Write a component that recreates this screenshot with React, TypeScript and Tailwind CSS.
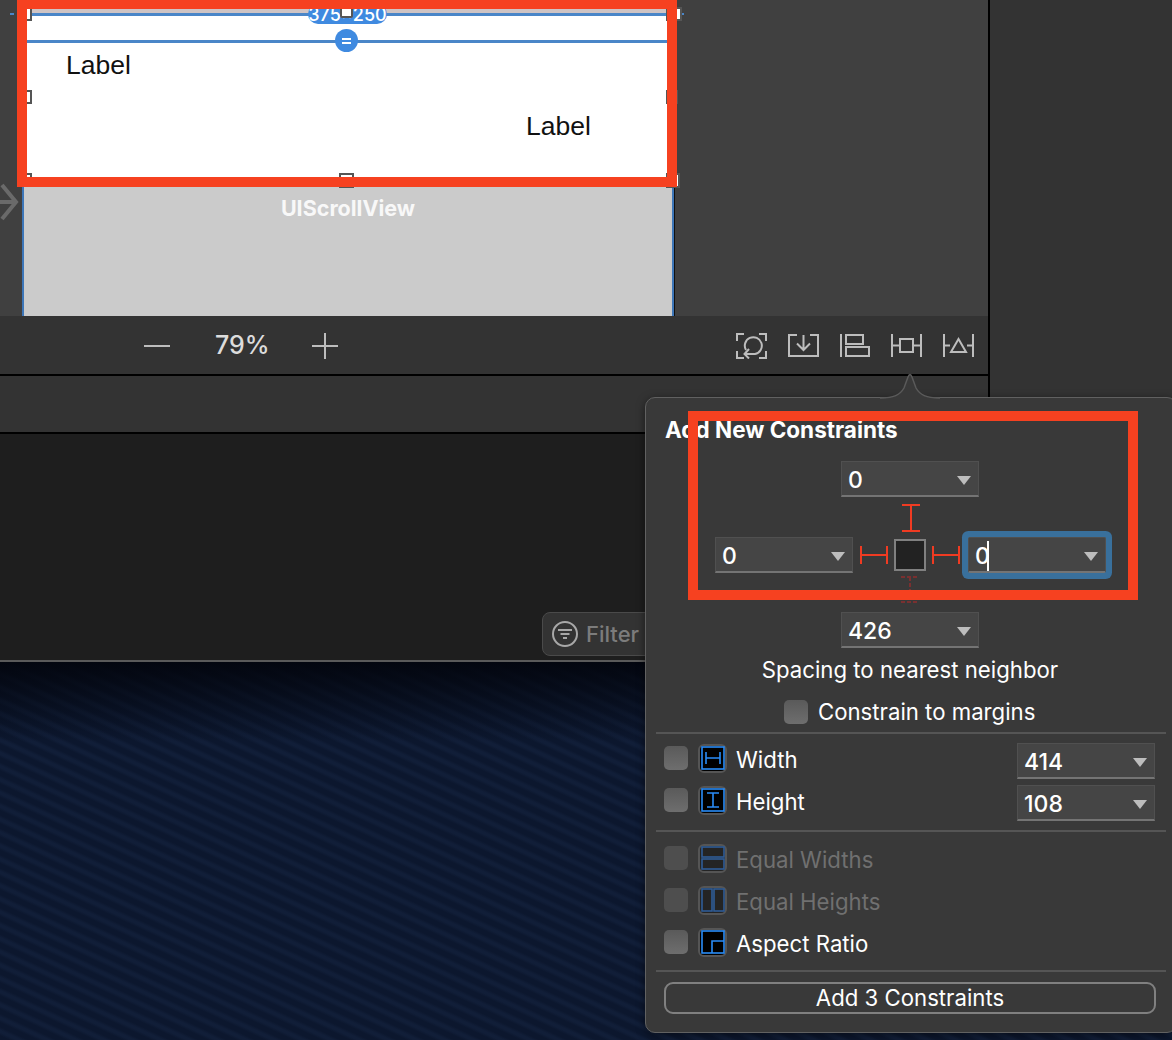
import React from "react";

const Caret = () => (
  <svg width="14" height="9" viewBox="0 0 14 9" className="absolute right-[7px] top-[14px]">
    <path d="M0 0H14L7 9Z" fill="#bdbdbd" />
  </svg>
);

function Field({ value, cursor, className = "" }: { value: string; cursor?: boolean; className?: string }) {
  return (
    <div className={`relative h-[36px] w-[138px] shrink-0 border border-[#505050] border-b-2 border-b-[#747474] bg-[#454545] pl-[6px] text-[23px] font-medium leading-[36px] text-white ${className}`}>
      <span>{value}</span>
      {cursor && <span className="absolute left-[18px] top-[3px] h-[30px] w-[2px] bg-white" />}
      <Caret />
    </div>
  );
}

const Check = ({ dim, className = "" }: { dim?: boolean; className?: string }) => (
  <div className={`h-[24px] w-[24px] shrink-0 rounded-[5px] ${dim ? "bg-[#4e4e4e]" : "bg-gradient-to-b from-[#5a5a5a] to-[#6e6e6e]"} ${className}`} />
);

function ToolIcon({ children, dim }: { children: React.ReactNode; dim?: boolean }) {
  return (
    <div className={`flex h-[29px] w-[29px] shrink-0 items-center justify-center rounded-[6px] border-2 border-[#555] ${dim ? "bg-[#242424]" : "bg-black"}`}>
      <svg width="24" height="24" viewBox="0 0 24 24" fill="none" stroke={dim ? "#2f5c96" : "#2a8cf7"} strokeWidth="1.600">
        {children}
      </svg>
    </div>
  );
}

function Row({ icon, label, dim, value }: { icon: React.ReactNode; label: string; dim?: boolean; value?: string }) {
  return (
    <div className="flex h-[42px] items-center pl-[18px] pr-[21px]">
      <Check dim={dim} className="-translate-y-[2px]" />
      <div className="ml-[10px] -translate-y-[2px]">
        <ToolIcon dim={dim}>{icon}</ToolIcon>
      </div>
      <span className={`ml-[9px] text-[22.2px] ${dim ? "text-[#707070]" : "text-white"}`}>{label}</span>
      {value && <Field value={value} className="ml-auto translate-y-[1px]" />}
    </div>
  );
}

const Divider = ({ className = "" }: { className?: string }) => (
  <div className={`mx-[10px] h-[2px] bg-[#555] ${className}`} />
);

const Handle = ({ className }: { className: string }) => (
  <div className={`absolute border-2 border-[#555] bg-white ${className}`} />
);

const Glyph = ({ w, h, children }: { w: number; h: number; children: React.ReactNode }) => (
  <svg width={w} height={h} viewBox={`0 0 ${w} ${h}`} fill="none" stroke="#bdbdbd" strokeWidth="2">
    {children}
  </svg>
);

export default function App() {
  return (
    <div className="relative h-[1040px] w-[1172px] overflow-hidden bg-[#0c1830] font-['Inter','Liberation_Sans',sans-serif]">
      <div className="flex h-[662px]">
        <div className="flex w-[988px] shrink-0 flex-col">
          {/* Canvas */}
          <div className="relative h-[316px] shrink-0 overflow-hidden bg-[#404040] pl-[22px]">
            <div className="w-[652px] border-x-2 border-[#3d76b8] bg-[#cbcbcb] shadow-[1px_0_0_#111]">
              <div className="relative h-[178px] bg-white">
                <div className="h-[13px] bg-[#cfc4c4]" />
                <div className="h-[3px] bg-[#4a86c8]" />
                <div className="mt-[24px] h-[3px] bg-[#4a86c8]" />
                <div className="absolute left-[42px] top-[48px] text-[26.500px] leading-[34px] text-[#111] [font-family:'Liberation_Sans']">Label</div>
                <div className="absolute left-[502px] top-[109px] text-[26.500px] leading-[34px] text-[#111] [font-family:'Liberation_Sans']">Label</div>
                <div className="absolute left-[284px] top-[4px] h-[20px] w-[79px] rounded-full bg-[#3f8ae0] text-center text-[18px] font-medium leading-[22px] text-white">375×250</div>
                <Handle className="left-[316px] top-[4px] h-[14px] w-[13px] rounded-[2px]" />
                <div className="absolute left-[311px] top-[29px] flex h-[23px] w-[23px] flex-col items-center justify-center gap-[2px] rounded-full bg-[#3f8ae0]">
                  <span className="h-[2px] w-[9px] bg-white" />
                  <span className="h-[2px] w-[9px] bg-white" />
                </div>
              </div>
              <div className="h-[138px] pt-[18px] text-center text-[21.500px] font-bold leading-[25px] text-[#f8f8f8]">UIScrollView</div>
            </div>
            <svg width="20" height="38" viewBox="0 0 20 38" fill="none" stroke="#6a6a6a" strokeWidth="4" className="absolute left-0 top-[183px]">
              <path d="M2 2L16 19L2 36M-4 19H16" />
            </svg>
            <div className="absolute left-[10px] top-[13px] h-[2px] w-[4px] bg-[#4a86c8]" />
            <div className="absolute left-[680px] top-[13px] h-[2px] w-[4px] bg-[#4a86c8]" />
            <Handle className="left-[339px] top-[173px] h-[15px] w-[15px]" />
            <Handle className="left-[24px] top-[90px] h-[14px] w-[8px]" />
            <Handle className="left-[666px] top-[90px] h-[14px] w-[12px]" />
            <Handle className="left-[24px] top-[7px] h-[14px] w-[8px]" />
            <Handle className="left-[666px] top-[7px] h-[14px] w-[16px]" />
            <Handle className="left-[24px] top-[173px] h-[14px] w-[8px]" />
            <Handle className="left-[666px] top-[173px] h-[15px] w-[14px]" />
          </div>

          {/* Toolbar */}
          <div className="flex h-[60px] shrink-0 items-center border-b-2 border-black bg-[#333] pl-[144px] pr-[14px] pt-[1px]">
            <Glyph w={26} h={2}><path d="M0 1H26" /></Glyph>
            <span className="ml-[45px] w-[52px] text-[25px] font-medium text-[#dcdcdc]">79%</span>
            <span className="ml-[45px]">
              <Glyph w={26} h={26}><path d="M0 13H26M13 0V26" /></Glyph>
            </span>
            <div className="ml-auto flex items-center gap-[21px]">
              <Glyph w={31} h={26}>
                <path d="M8 1H1V8M23 1H30V8M1 18V25H8M30 18V25H23" />
                <path d="M10 17A8.500 8.500 0 1 1 19 21H9M13 16L8.500 21L13 25.500" />
              </Glyph>
              <Glyph w={31} h={23}>
                <path d="M9 1H1V22H30V1H22" />
                <path d="M15.500 1V15M9 9.500L15.500 16L22 9.500" />
              </Glyph>
              <Glyph w={30} h={23}>
                <path d="M1 0V23" />
                <rect x="6" y="1" width="17" height="9" />
                <rect x="6" y="13" width="23" height="9" />
              </Glyph>
              <Glyph w={31} h={23}>
                <path d="M1 0V23M30 0V23M1 11.500H8M22 11.500H30" />
                <rect x="9" y="5" width="13" height="13" />
              </Glyph>
              <Glyph w={31} h={23}>
                <path d="M1 0V23M30 0V23M1 11.500H7M24 11.500H30" />
                <path d="M15.500 5L23 18H8Z" />
              </Glyph>
            </div>
          </div>

          <div className="h-[58px] shrink-0 border-b-2 border-black bg-[#333]" />

          {/* Dark panel */}
          <div className="flex flex-1 justify-end border-b-2 border-[#5a5a5a] bg-[#1e1e1e] pr-[246px] pt-[178px]">
            <div className="flex h-[44px] w-[200px] items-center rounded-[8px] border border-[#4a4a4a] bg-[#333] pl-[9px]">
              <svg width="26" height="26" viewBox="0 0 26 26" fill="none" stroke="#a8a8a8" strokeWidth="2">
                <circle cx="13" cy="13" r="12" />
                <path d="M6 9H20M8.500 13H17.500M11 17H15" />
              </svg>
              <span className="ml-[8px] text-[22px] font-medium text-[#7c7c7c]">Filter</span>
            </div>
          </div>
        </div>
        <div className="w-[2px] shrink-0 bg-black" />
        <div className="flex-1 bg-[#333]" />
      </div>

      {/* Denim */}
      <div className="h-[378px] bg-[linear-gradient(180deg,#03060f_0px,rgba(3,6,15,0)_80px),repeating-linear-gradient(25deg,#0c172e_0px,#0c172e_4px,#111e38_7px,#111e38_9px,#0c172e_12px)]" />

      {/* Popover */}
      <div className="absolute left-[645px] top-[397px] z-10 w-[532px] rounded-[10px] border border-[#616161] bg-[#393939] pb-[18px] shadow-[0_2px_8px_rgba(0,0,0,0.5)]">
        <div className="ml-[19px] mt-[18px] h-[28px] text-[22.500px] font-bold leading-[28px] text-white">Add New Constraints</div>
        <Field value="0" className="ml-[195px] mt-[17px]" />
        <svg width="18" height="28" viewBox="0 0 18 28" fill="none" stroke="#f03b22" strokeWidth="2" className="ml-[256px] mt-[7px] block">
          <path d="M0 1H18M0 27H18M9 1V27" />
        </svg>
        <div className="ml-[69px] mt-[5px] flex items-center">
          <Field value="0" />
          <svg width="28" height="18" viewBox="0 0 28 18" fill="none" stroke="#f03b22" strokeWidth="2" className="ml-[7px]">
            <path d="M1 0V18M27 0V18M1 9H27" />
          </svg>
          <div className="ml-[6px] h-[32px] w-[32px] border-2 border-[#808080] bg-[#222]" />
          <svg width="28" height="18" viewBox="0 0 28 18" fill="none" stroke="#f03b22" strokeWidth="2" className="ml-[6px]">
            <path d="M1 0V18M27 0V18M1 9H27" />
          </svg>
          <Field value="0" cursor className="ml-[8px] rounded-[2px] ring-[6px] ring-[#39709c]" />
        </div>
        <svg width="18" height="27" viewBox="0 0 18 27" fill="none" stroke="#7a3030" strokeWidth="2" strokeDasharray="4 2" className="ml-[255px] mt-[3px] block">
          <path d="M0 1H18M0 26H18M9 1V26" />
        </svg>
        <Field value="426" className="ml-[195px] mt-[9px]" />
        <div className="mt-[8px] h-[28px] text-center text-[22.200px] leading-[28px] text-white">
          <span className="-ml-[2px]">Spacing to nearest neighbor</span>
        </div>
        <div className="mt-[14px] flex h-[28px] items-center pl-[138px]">
          <Check />
          <span className="ml-[10px] text-[22.200px] text-white">Constrain to margins</span>
        </div>
        <Divider className="mt-[6px]" />
        <div className="mt-[5px]">
          <Row label="Width" value="414" icon={<><rect x="1" y="1" width="22" height="22" /><path d="M5 6V18M19 6V18M5 12H19" /></>} />
          <Row label="Height" value="108" icon={<><rect x="1" y="1" width="22" height="22" /><path d="M6 5H18M6 19H18M12 5V19" /></>} />
        </div>
        <Divider className="mt-[7px]" />
        <div className="mt-[7px]">
          <Row dim label="Equal Widths" icon={<><rect x="1" y="1" width="22" height="10" /><rect x="1" y="13" width="22" height="10" /></>} />
          <Row dim label="Equal Heights" icon={<><rect x="1" y="1" width="10" height="22" /><rect x="13" y="1" width="10" height="22" /></>} />
          <Row label="Aspect Ratio" icon={<><rect x="1" y="1" width="22" height="22" /><path d="M11 23V11H23" /></>} />
        </div>
        <Divider className="mt-[5px]" />
        <div className="ml-[18px] mt-[10px] flex h-[32px] w-[492px] items-center justify-center rounded-[9px] border-2 border-[#808080] text-[22.200px] text-white">
          Add 3 Constraints
        </div>
      </div>
      <svg width="60" height="28" viewBox="0 0 60 28" className="absolute left-[880px] top-[371px] z-20">
        <path d="M0 28H60V27C46 27 40 24 36 17L32 6Q30 1 28 6L24 17C20 24 14 27 0 27Z" fill="#393939" />
        <path d="M0 27C14 27 20 24 24 17L28 6Q30 1 32 6L36 17C40 24 46 27 60 27" fill="none" stroke="#5a5a5a" strokeWidth="1.500" />
      </svg>

      {/* Annotation rectangles */}
      <div className="absolute left-[17px] top-[-1px] z-30 h-[188px] w-[660px] border-[10px] border-[#f64120]" />
      <div className="absolute left-[688px] top-[411px] z-30 h-[189px] w-[450px] border-[10px] border-[#f64120]" />
    </div>
  );
}
